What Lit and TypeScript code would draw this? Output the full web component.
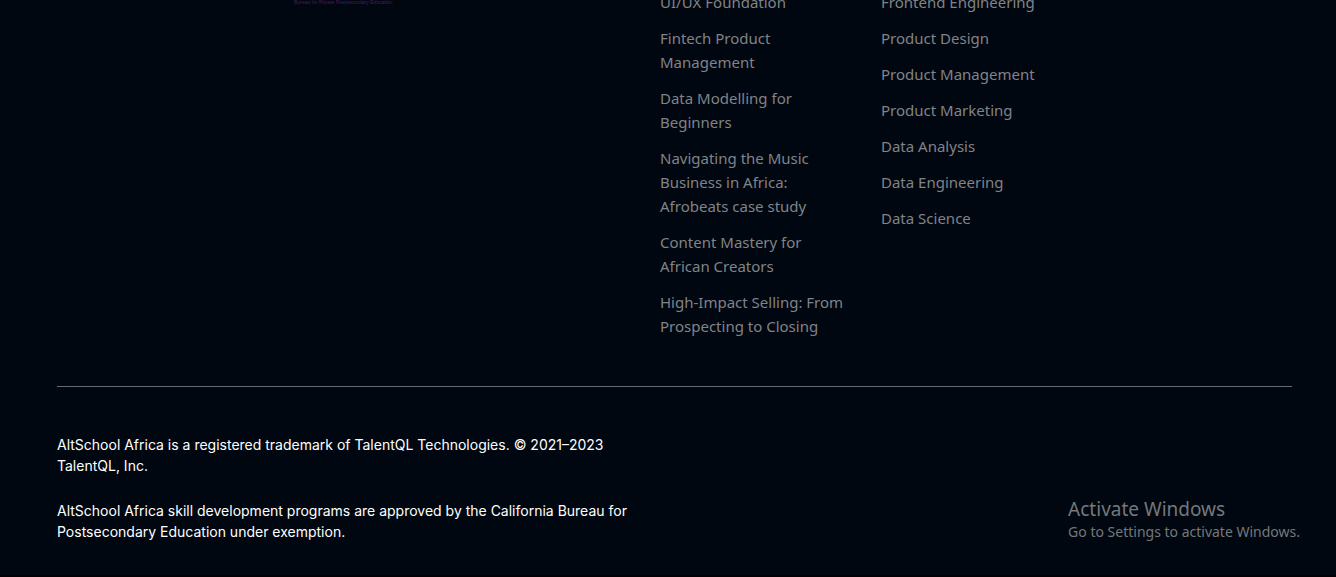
import { LitElement, html, css } from "lit";
import { customElement } from "lit/decorators.js";

const SHORT_COURSES = [
  "UI/UX Foundation",
  "Fintech Product Management",
  "Data Modelling for Beginners",
  "Navigating the Music Business in Africa: Afrobeats case study",
  "Content Mastery for African Creators",
  "High-Impact Selling: From Prospecting to Closing",
];

const PROGRAMS = [
  "Frontend Engineering",
  "Product Design",
  "Product Management",
  "Product Marketing",
  "Data Analysis",
  "Data Engineering",
  "Data Science",
];

@customElement("app-root")
export class AppRoot extends LitElement {
  static styles = css`
    :host {
      display: flex;
      flex-direction: column;
      justify-content: flex-end;
      box-sizing: border-box;
      height: 100vh;
      overflow: hidden;
      background: #000710;
      border-bottom: 2px solid #000;
      font-family: "Segoe UI", "Noto Sans", "Open Sans", sans-serif;
    }
    .footer {
      padding: 0 44px 33px 57px;
    }
    .columns {
      display: grid;
      grid-template-columns: minmax(0, 1fr) repeat(3, 190px);
      column-gap: 31px;
      padding-bottom: 48px;
      border-bottom: 1px solid #666a70;
    }
    .seal {
      margin: 0;
      padding: 8px 0 0 237px;
      font: 5px/8px "Liberation Sans", sans-serif;
      color: #4c1a5c;
    }
    .links {
      display: flex;
      flex-direction: column;
      gap: 12px;
      margin: 0;
      padding: 0;
      list-style: none;
      font-size: 15px;
      line-height: 24px;
    }
    .link {
      color: #808387;
      text-decoration: none;
    }
    .legal {
      display: flex;
      flex-direction: column;
      gap: 24px;
      max-width: 580px;
      padding-top: 47px;
      font: 400 14px/21px "Inter", sans-serif;
      color: #fff;
    }
    .note {
      margin: 0;
    }
    .activation {
      position: absolute;
      right: 36px;
      bottom: 35px;
      color: #74787c;
      font-size: 14px;
      line-height: 20px;
    }
    .activation-title {
      font-size: 19px;
      line-height: 26px;
    }
  `;

  private links(items: string[]) {
    return html`<ul class="links">
      ${items.map((item) => html`<li><a class="link" href="#">${item}</a></li>`)}
    </ul>`;
  }

  render() {
    return html`
      <footer class="footer">
        <div class="columns">
          <p class="seal">Bureau for Private Postsecondary Education</p>
          ${this.links(SHORT_COURSES)} ${this.links(PROGRAMS)}
        </div>
        <div class="legal">
          <p class="note">
            AltSchool Africa is a registered trademark of TalentQL Technologies. © 2021–2023
            TalentQL, Inc.
          </p>
          <p class="note">
            AltSchool Africa skill development programs are approved by the California Bureau for
            Postsecondary Education under exemption.
          </p>
        </div>
      </footer>
      <aside class="activation">
        <div class="activation-title">Activate Windows</div>
        <div>Go to Settings to activate Windows.</div>
      </aside>
    `;
  }
}
